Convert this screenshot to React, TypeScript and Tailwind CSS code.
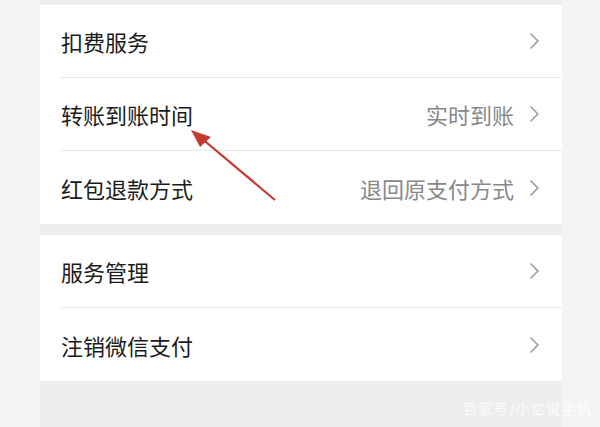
import React from "react";

const groups = [
  [
    { label: "扣费服务" },
    { label: "转账到账时间", value: "实时到账" },
    { label: "红包退款方式", value: "退回原支付方式" },
  ],
  [{ label: "服务管理" }, { label: "注销微信支付" }],
];

function Chevron() {
  return (
    <svg width="10" height="18" viewBox="0 0 10 18" className="shrink-0">
      <path d="M1.5 1.5 L8.8 9 L1.5 16.5" fill="none" stroke="#a0a0a0" strokeWidth="1.7" />
    </svg>
  );
}

export default function App() {
  return (
    <div
      className="relative w-[600px] h-[427px] overflow-hidden bg-[#f4f4f4] px-[40px] pr-[38px]"
      style={{ fontFamily: '"Noto Sans CJK SC", "Noto Sans", sans-serif' }}
    >
      <div className="h-full bg-[#ededed] pt-[5px] flex flex-col gap-[11px]">
        {groups.map((rows, g) => (
          <div key={g} className="bg-white">
            {rows.map((row, i) => (
              <div key={i} className="pl-[21px]">
                <div
                  className={`h-[73px] flex items-center pr-[23px] ${
                    i < rows.length - 1 ? "border-b border-[#e8e8e8]" : ""
                  }`}
                >
                  <span className="text-[22px] text-[#1b1b1b] leading-none">{row.label}</span>
                  <span className="ml-auto mr-[15px] text-[22px] text-[#888888] leading-none">
                    {row.value}
                  </span>
                  <Chevron />
                </div>
              </div>
            ))}
          </div>
        ))}
      </div>

      {/* red annotation arrow */}
      <svg className="absolute left-0 top-0" width="600" height="427">
        <line x1="275" y1="200" x2="200" y2="137" stroke="#c63a2f" strokeWidth="2.2" />
        <polygon points="191,130 211,137 200,147" fill="#c63a2f" />
      </svg>

      <div className="absolute left-[463px] top-[401px] text-[14px] leading-none text-white/80 tracking-[1.3px]">
        百家号/小忆说手机
      </div>
    </div>
  );
}
